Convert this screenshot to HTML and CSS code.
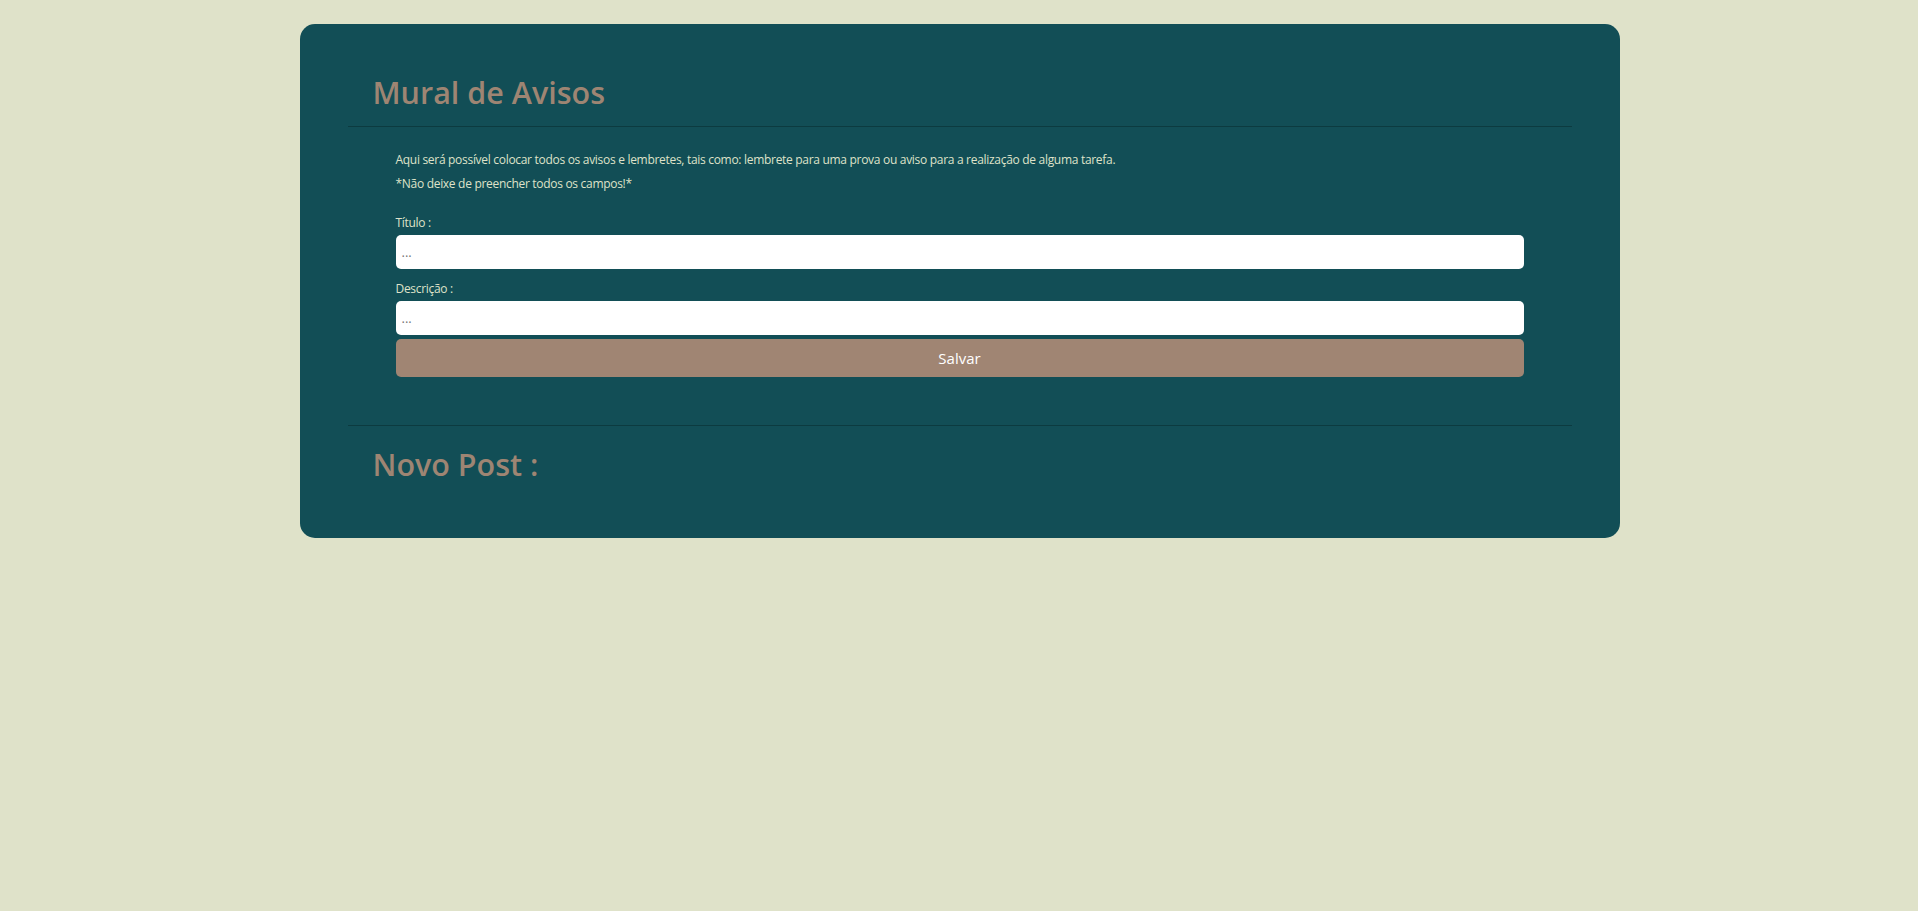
FILE: index.html
```html
<!DOCTYPE html>
<html lang="pt-BR">
<head>
<meta charset="utf-8">
<title>Mural de Avisos</title>
<link rel="stylesheet" href="styles.css">
</head>
<body>
<main class="card">
  <header class="section-head">
    <h1 class="title">Mural de Avisos</h1>
  </header>
  <section class="form-area">
    <p class="info">Aqui será possível colocar todos os avisos e lembretes, tais como: lembrete para uma prova ou aviso para a realização de alguma tarefa.</p>
    <p class="info">*Não deixe de preencher todos os campos!*</p>
    <form class="form">
      <label class="label" for="titulo">Título :</label>
      <input class="field" id="titulo" type="text" placeholder="...">
      <label class="label label-second" for="descricao">Descrição :</label>
      <input class="field" id="descricao" type="text" placeholder="..." autofocus>
      <button class="save" type="button">Salvar</button>
    </form>
  </section>
  <header class="section-head section-posts">
    <h2 class="title">Novo Post :</h2>
  </header>
</main>
</body>
</html>
```
FILE: styles.css
```css
* { box-sizing: border-box; }

html, body {
  margin: 0;
  padding: 0;
}

body {
  background: #dfe2c9;
  font-family: "Open Sans", "Noto Sans", sans-serif;
  color: #dfe2c9;
  padding-left: 1px;
}

.card {
  width: 1320px;
  margin: 24px auto 0;
  padding: 0 48px 54px;
  background: #124e56;
  border-radius: 15px;
}

.section-head {
  padding: 48px 25px 14px;
  border-bottom: 1px solid #0c3b40;
}

.section-posts {
  border-bottom: none;
  border-top: 1px solid #0c3b40;
  padding-top: 18px;
  padding-bottom: 0;
  margin-top: 48px;
}

.title {
  margin: 0;
  font-size: 30.5px;
  line-height: 40px;
  font-weight: 600;
  color: #9e8573;
}

.form-area {
  padding: 23px 48px 0;
}

.info {
  margin: 0 0 4px;
  font-size: 12px;
  line-height: 20px;
  letter-spacing: -0.3px;
}

.form {
  display: flex;
  flex-direction: column;
  margin-top: 19px;
}

.label {
  font-size: 12px;
  line-height: 20px;
  letter-spacing: -0.3px;
  margin-bottom: 2px;
}

.label-second {
  margin-top: 10px;
}

.field {
  height: 34px;
  border: none;
  border-radius: 5px;
  background: #ffffff;
  padding: 0 6px;
  font-family: inherit;
  font-size: 13px;
  color: #222;
  caret-color: #000;
  outline: none;
}

.field::placeholder {
  color: #777;
}

.save {
  margin-top: 4px;
  height: 38px;
  border: none;
  border-radius: 5px;
  background: #a08573;
  color: #ffffff;
  font-family: inherit;
  font-size: 15px;
  cursor: pointer;
}
```
